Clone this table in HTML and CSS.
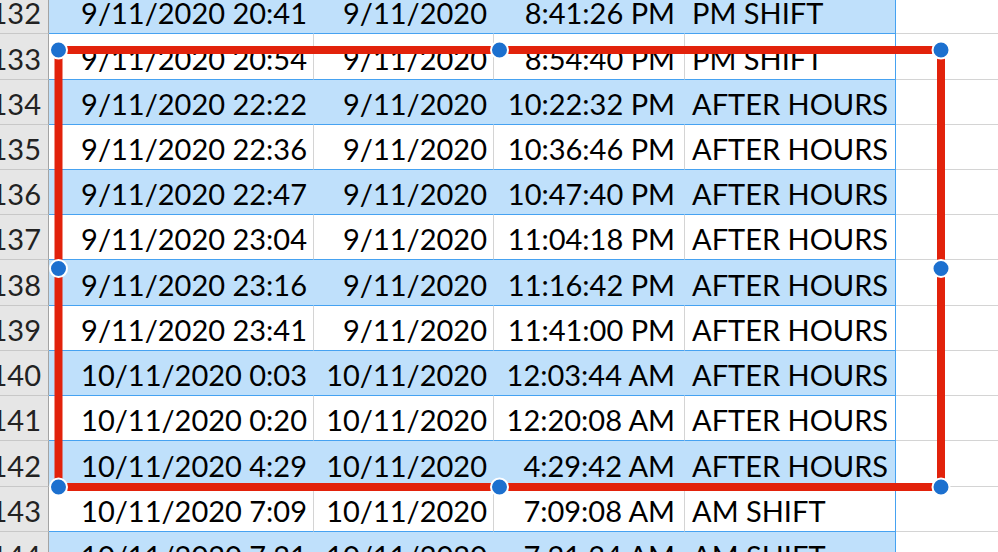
FILE: index.html
```html
<!DOCTYPE html>
<html>
<head>
<meta charset="utf-8">
<link rel="stylesheet" href="styles.css">
</head>
<body>
<div class="sheet">
  <div class="row band r45"><div class="hdr">132</div><div class="c a">9/11/2020 20:41</div><div class="c b">9/11/2020</div><div class="c t">8:41:26 PM</div><div class="c d">PM SHIFT</div><div class="c e"></div></div>
  <div class="row r46"><div class="hdr">133</div><div class="c a">9/11/2020 20:54</div><div class="c b">9/11/2020</div><div class="c t">8:54:40 PM</div><div class="c d">PM SHIFT</div><div class="c e"></div></div>
  <div class="row band r45"><div class="hdr">134</div><div class="c a">9/11/2020 22:22</div><div class="c b">9/11/2020</div><div class="c t">10:22:32 PM</div><div class="c d">AFTER HOURS</div><div class="c e"></div></div>
  <div class="row r45"><div class="hdr">135</div><div class="c a">9/11/2020 22:36</div><div class="c b">9/11/2020</div><div class="c t">10:36:46 PM</div><div class="c d">AFTER HOURS</div><div class="c e"></div></div>
  <div class="row band r45"><div class="hdr">136</div><div class="c a">9/11/2020 22:47</div><div class="c b">9/11/2020</div><div class="c t">10:47:40 PM</div><div class="c d">AFTER HOURS</div><div class="c e"></div></div>
  <div class="row r45"><div class="hdr">137</div><div class="c a">9/11/2020 23:04</div><div class="c b">9/11/2020</div><div class="c t">11:04:18 PM</div><div class="c d">AFTER HOURS</div><div class="c e"></div></div>
  <div class="row band r46"><div class="hdr">138</div><div class="c a">9/11/2020 23:16</div><div class="c b">9/11/2020</div><div class="c t">11:16:42 PM</div><div class="c d">AFTER HOURS</div><div class="c e"></div></div>
  <div class="row r45"><div class="hdr">139</div><div class="c a">9/11/2020 23:41</div><div class="c b">9/11/2020</div><div class="c t">11:41:00 PM</div><div class="c d">AFTER HOURS</div><div class="c e"></div></div>
  <div class="row band r45"><div class="hdr">140</div><div class="c a">10/11/2020 0:03</div><div class="c b">10/11/2020</div><div class="c t">12:03:44 AM</div><div class="c d">AFTER HOURS</div><div class="c e"></div></div>
  <div class="row r45"><div class="hdr">141</div><div class="c a">10/11/2020 0:20</div><div class="c b">10/11/2020</div><div class="c t">12:20:08 AM</div><div class="c d">AFTER HOURS</div><div class="c e"></div></div>
  <div class="row band r46"><div class="hdr">142</div><div class="c a">10/11/2020 4:29</div><div class="c b">10/11/2020</div><div class="c t">4:29:42 AM</div><div class="c d">AFTER HOURS</div><div class="c e"></div></div>
  <div class="row r45"><div class="hdr">143</div><div class="c a">10/11/2020 7:09</div><div class="c b">10/11/2020</div><div class="c t">7:09:08 AM</div><div class="c d">AM SHIFT</div><div class="c e"></div></div>
  <div class="row band r45"><div class="hdr">144</div><div class="c a">10/11/2020 7:21</div><div class="c b">10/11/2020</div><div class="c t">7:21:34 AM</div><div class="c d">AM SHIFT</div><div class="c e"></div></div>
</div>
<svg class="overlay" width="998" height="552" viewBox="0 0 998 552">
  <rect x="58.5" y="50" width="882.5" height="437" fill="none" stroke="#e2220b" stroke-width="8"/>
  <g fill="#1c70cf" stroke="#ffffff" stroke-width="2">
    <circle cx="58.5" cy="50" r="8.5"/>
    <circle cx="499.5" cy="50" r="8.5"/>
    <circle cx="941" cy="50" r="8.5"/>
    <circle cx="58.5" cy="268.5" r="8.5"/>
    <circle cx="941" cy="268.5" r="8.5"/>
    <circle cx="58.5" cy="487" r="8.5"/>
    <circle cx="499.5" cy="487" r="8.5"/>
    <circle cx="941" cy="487" r="8.5"/>
  </g>
</svg>
</body>
</html>
```
FILE: styles.css
```css
html, body {
  margin: 0;
  padding: 0;
  background: #ffffff;
  overflow: hidden;
  width: 998px;
  height: 552px;
}
body {
  font-family: Lato, "Liberation Sans", sans-serif;
  font-size: 29px;
  color: #000000;
  position: relative;
}
.sheet {
  margin-top: -11px;
  margin-left: -13px;
  width: 1040px;
  display: flex;
  flex-direction: column;
}
.row {
  display: grid;
  grid-template-columns: 62px 265px 180px 191px 211px 1fr;
  height: 45px;
}
.row.r46 { height: 46px; }
.hdr, .c {
  box-sizing: border-box;
  display: flex;
  align-items: flex-end;
  line-height: 29px;
  padding-bottom: 6px;
  white-space: nowrap;
  overflow: hidden;
  border-bottom: 1px solid #46a2f1;
  border-right: 1px solid #d4d4d4;
}
.hdr {
  background: #e6e6e6;
  color: #222222;
  border-bottom-color: #c8c8c8;
  border-right-color: #a3a3a3;
  justify-content: flex-end;
  padding-right: 7px;
}
.a, .b, .t {
  justify-content: flex-end;
  padding-right: 6px;
}
.t { padding-right: 9px; }
.d {
  padding-left: 7px;
  border-right-color: #46a2f1;
}
.e {
  border-right: none;
  border-bottom-color: #d4d4d4;
}
.band .a, .band .b, .band .t, .band .d {
  background: #bfe0fb;
}
.band .a, .band .b, .band .t {
  border-right-color: #bfe0fb;
}
.overlay {
  position: absolute;
  left: 0;
  top: 0;
  pointer-events: none;
}
```
